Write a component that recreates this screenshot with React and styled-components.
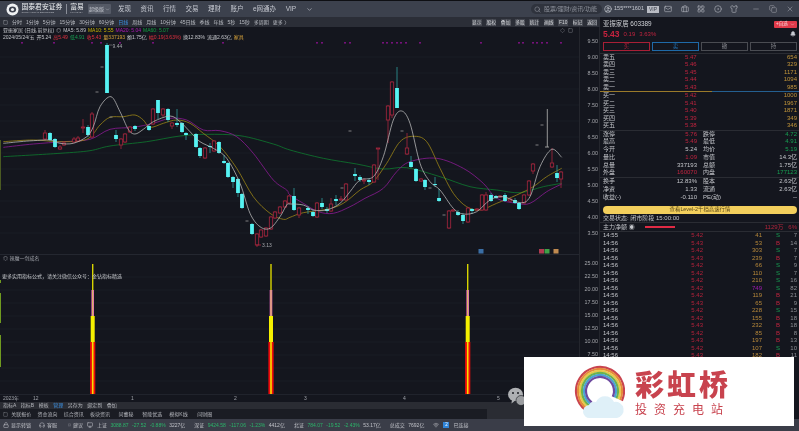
import React from "react";
import styled, { createGlobalStyle } from "styled-components";
import { Mail, Briefcase, LayoutGrid, CircleDot, Shirt, Minus, Copy, X, Search, Bell, CircleUser, ChevronDown, Square, Diamond, Headphones, MessageSquare, Monitor, Wifi, Lock } from "lucide-react";

const GlobalStyle = createGlobalStyle`
  html, body { margin: 0; padding: 0; background: #14161e; }
  * { box-sizing: border-box; }
`;

const navItems = ["发现", "资讯", "行情", "交易", "理财", "账户", "e网通办", "VIP"];
const periods = ["分时", "1分钟", "5分钟", "15分钟", "30分钟", "60分钟", "日线", "周线", "月线", "10分钟", "45日线", "季线", "年线", "5秒", "15秒", "多周期", "更多 〉"];
const toolButtons = ["显示", "股权", "叠加", "多股", "统计", "画线", "F10", "标记", "返回"];
const priceLabels = ["9.50", "9.00", "8.50", "8.00", "7.50", "7.00", "6.50", "6.00", "5.50", "5.00", "4.50", "4.00", "3.50"];
const indicatorLabels = ["25.00", "22.50", "20.00", "17.50", "15.00", "12.50", "10.00", "7.50"];

// x, top, bottom, wickTop, wickBottom
const downCandles = [
  [107, 45, 93, 43, 93], [50, 133, 140, 132, 141], [55, 139, 147, 138, 148], [88, 127, 135, 125, 137],
  [116, 135, 139, 130, 142], [135, 126, 129, 125, 131], [149, 126, 130, 125, 131], [158, 100, 113, 100, 119],
  [168, 109, 120, 108, 122], [177, 123, 125, 109, 127], [182, 123, 132, 122, 133], [186, 133, 135, 132, 140],
  [196, 134, 147, 133, 148], [200, 148, 156, 147, 158], [210, 146, 147, 143, 153], [219, 142, 153, 141, 154],
  [224, 161, 163, 155, 164], [228, 163, 177, 162, 178], [233, 177, 182, 176, 188], [238, 179, 193, 178, 197],
  [242, 194, 208, 193, 209], [252, 224, 234, 223, 235], [294, 196, 210, 188, 211], [308, 208, 210, 206, 214],
  [313, 212, 216, 210, 217], [322, 203, 207, 198, 209], [327, 209, 211, 207, 213], [336, 199, 201, 195, 205],
  [355, 174, 176, 168, 181], [360, 177, 180, 175, 182], [369, 180, 182, 178, 185], [397, 88, 108, 67, 108],
  [411, 162, 167, 156, 168], [416, 169, 181, 168, 182], [425, 180, 187, 179, 190], [435, 184, 185, 177, 187],
  [439, 198, 201, 189, 202], [458, 212, 215, 210, 216], [463, 215, 221, 213, 224], [472, 209, 211, 208, 214],
  [491, 195, 201, 193, 202], [496, 196, 198, 195, 199], [505, 195, 201, 193, 202], [515, 200, 203, 198, 204],
  [519, 203, 209, 202, 210], [557, 173, 178, 165, 182]
];
const upCandles = [
  [45, 133, 139, 130, 140], [60, 147, 149, 145, 150], [64, 143, 145, 141, 146], [74, 139, 142, 137, 143],
  [78, 138, 141, 136, 142], [83, 127, 128, 119, 133], [92, 114, 137, 112, 138], [121, 139, 145, 138, 149],
  [125, 134, 142, 133, 143], [130, 127, 132, 126, 133], [153, 109, 124, 108, 125], [163, 109, 115, 108, 117],
  [172, 123, 126, 122, 129], [205, 148, 158, 147, 159], [214, 141, 151, 140, 152], [257, 234, 245, 233, 247],
  [261, 230, 237, 229, 238], [266, 228, 236, 227, 237], [271, 217, 229, 216, 230], [275, 212, 218, 211, 219],
  [280, 207, 213, 206, 214], [285, 201, 207, 200, 208], [289, 196, 203, 195, 204], [299, 208, 215, 207, 218],
  [317, 203, 217, 202, 218], [331, 204, 211, 198, 212], [341, 199, 200, 196, 201], [346, 184, 200, 183, 201],
  [364, 180, 181, 178, 184], [374, 165, 182, 164, 183], [378, 148, 149, 148, 180], [388, 106, 120, 105, 143],
  [392, 82, 115, 81, 118], [407, 148, 154, 133, 155], [421, 179, 181, 178, 182], [449, 211, 228, 210, 229],
  [453, 210, 211, 209, 212], [468, 208, 222, 207, 223], [477, 209, 210, 208, 211], [482, 195, 210, 194, 211],
  [486, 195, 210, 192, 211], [500, 196, 197, 195, 198], [510, 199, 201, 198, 202], [524, 195, 203, 194, 204],
  [529, 181, 195, 180, 196], [533, 164, 171, 163, 174], [552, 163, 167, 148, 168], [561, 172, 179, 171, 188]
];
const dashMarks = [[97, 92], [111, 117], [102, 67], [342, 188], [350, 131], [402, 131], [430, 188], [444, 215], [542, 125], [537, 145], [247, 221]];
const signalDots = [22, 54, 92, 101, 120, 153, 223, 317, 322, 345, 350, 383, 387, 392, 397, 401, 406, 420, 481, 519, 523, 533, 537, 542, 547, 561];

const fromZoom = (left, right) => [
  ...left.map(([x, y]) => [x / 3, 40 + y / 3]),
  ...right.map(([x, y]) => [290 + x / 3, 40 + y / 3])
];
const ma5 = fromZoom(
  [[10, 310], [60, 305], [100, 302], [150, 300], [180, 310], [220, 310], [260, 290], [280, 260], [300, 200], [333, 170], [360, 215], [385, 268], [405, 282], [430, 268], [460, 245], [510, 228], [540, 245], [570, 275], [600, 305], [640, 325], [680, 355], [720, 430], [750, 520], [780, 560], [810, 565], [840, 530], [860, 495]],
  [[0, 492], [40, 495], [70, 510], [110, 510], [150, 490], [180, 455], [210, 420], [250, 410], [280, 350], [310, 240], [335, 213], [360, 250], [390, 370], [420, 425], [450, 450], [490, 505], [520, 522], [560, 515], [600, 480], [640, 470], [690, 488], [720, 470], [750, 380], [785, 328], [815, 352]]
);
const ma10 = fromZoom(
  [[10, 305], [100, 300], [180, 305], [260, 298], [300, 255], [330, 232], [370, 230], [405, 225], [430, 240], [450, 262], [490, 250], [530, 240], [570, 250], [610, 280], [660, 320], [710, 385], [760, 470], [810, 520], [850, 538]],
  [[0, 532], [40, 518], [110, 508], [160, 490], [210, 450], [250, 425], [290, 370], [330, 305], [370, 289], [410, 305], [450, 385], [490, 460], [530, 500], [570, 510], [620, 490], [680, 465], [730, 440], [770, 410], [815, 385]]
);
const ma20 = fromZoom(
  [[10, 322], [100, 312], [190, 305], [270, 298], [330, 268], [400, 262], [460, 250], [510, 235], [560, 240], [610, 270], [660, 272], [710, 290], [760, 340], [820, 420], [860, 450]],
  [[0, 465], [40, 490], [85, 515], [130, 520], [180, 500], [225, 475], [280, 445], [320, 395], [360, 365], [440, 355], [520, 385], [580, 430], [620, 475], [680, 490], [720, 490], [770, 455], [815, 432]]
);
const ma60 = fromZoom(
  [[10, 350], [180, 340], [270, 332], [330, 318], [440, 305], [540, 288], [620, 283], [720, 287], [820, 312]],
  [[0, 330], [100, 355], [200, 372], [280, 387], [350, 383], [450, 410], [540, 440], [620, 450], [690, 458], [760, 440], [815, 430]]
);

// catmull-rom through the hand read points
const smooth = pts => {
  let d = `M${pts[0][0]} ${pts[0][1]}`;
  for (let i = 0; i < pts.length - 1; i++) {
    const p0 = pts[i - 1] || pts[i];
    const p1 = pts[i];
    const p2 = pts[i + 1];
    const p3 = pts[i + 2] || p2;
    const c1x = p1[0] + (p2[0] - p0[0]) / 6;
    const c1y = p1[1] + (p2[1] - p0[1]) / 6;
    const c2x = p2[0] - (p3[0] - p1[0]) / 6;
    const c2y = p2[1] - (p3[1] - p1[1]) / 6;
    d += ` C${c1x.toFixed(1)} ${c1y.toFixed(1)} ${c2x.toFixed(1)} ${c2y.toFixed(1)} ${p2[0].toFixed(1)} ${p2[1].toFixed(1)}`;
  }
  return d;
};

const askRows = [["卖五", "5.47", "654"], ["卖四", "5.46", "329"], ["卖三", "5.45", "1171"], ["卖二", "5.44", "1094"], ["卖一", "5.43", "985"]];
const bidRows = [["买一", "5.42", "1000"], ["买二", "5.41", "1967"], ["买三", "5.40", "1871"], ["买四", "5.39", "349"], ["买五", "5.38", "346"]];
const statsA = [
  ["涨停", "5.76", "red", "跌停", "4.72", "green"],
  ["最高", "5.49", "red", "最低", "4.91", "green"],
  ["今开", "5.24", "", "均价", "5.19", "green"],
  ["量比", "1.09", "red", "市值", "14.3亿", ""],
  ["总量", "337193", "", "总额", "1.75亿", ""],
  ["外盘", "160070", "red", "内盘", "177123", "green"]
];
const statsB = [
  ["换手", "12.83%", "", "股本", "2.63亿", ""],
  ["净资", "1.33", "", "流通", "2.63亿", ""],
  ["收益(-)", "-0.110", "", "PE(动)", "--", ""]
];
const trades = [
  ["14:55", "5.42", "41", "S", "7"], ["14:56", "5.43", "53", "B", "14"], ["14:56", "5.42", "303", "S", "7"],
  ["14:56", "5.43", "239", "B", "7"], ["14:56", "5.42", "66", "S", "9"], ["14:56", "5.42", "110", "S", "7"],
  ["14:56", "5.42", "210", "S", "16"], ["14:56", "5.42", "749", "S", "82"], ["14:56", "5.42", "119", "B", "21"],
  ["14:56", "5.43", "65", "B", "9"], ["14:56", "5.42", "228", "S", "15"], ["14:56", "5.42", "155", "B", "18"],
  ["14:56", "5.43", "232", "B", "18"], ["14:56", "5.42", "85", "B", "8"], ["14:56", "5.43", "197", "B", "13"],
  ["14:56", "5.42", "107", "S", "10"], ["14:56", "5.43", "182", "B", "11"]
];
const ticks = [["2023年", 30], ["12", 98], ["1", 103], ["2", 70], ["3", 99], ["4", 94], ["5", 40]];
const tabs = ["指标A", "指标B", "模板", "管理", "另存为", "绑定到", "叠加"];
const newsTabs = ["关联报价", "资金流向", "综合资讯", "板块资讯", "问董秘", "智能优选", "模拟K线", "问财圈"];

const colorOf = tone => (tone === "red" ? "#c0243f" : tone === "green" ? "#17a052" : "#c4c6cb");

const CandleChart = () => (
  <ChartSvg viewBox="0 40 579 214" width="579" height="214">
    {[57, 73, 89, 105, 121, 137, 153, 169, 185, 201, 217, 233].map(y => (
      <line key={y} x1="0" x2="579" y1={y} y2={y} stroke="#191c25" strokeWidth="1" />
    ))}
    {signalDots.map(x => <rect key={x} x={x - 0.8} y="42" width="1.6" height="1.6" fill="#8e1292" />)}
    <path d={smooth(ma60)} fill="none" stroke="#0e7a2e" strokeWidth="0.8" />
    <path d={smooth(ma20)} fill="none" stroke="#8c1a94" strokeWidth="0.8" />
    <path d={smooth(ma10)} fill="none" stroke="#9a8416" strokeWidth="0.8" />
    {upCandles.map(([x, t, b, wt, wb]) => (
      <g key={"u" + x}>
        <line x1={x} x2={x} y1={wt} y2={t} stroke="#a8263e" strokeWidth="0.8" />
        <line x1={x} x2={x} y1={b} y2={wb} stroke="#a8263e" strokeWidth="0.8" />
        <rect x={x - 1.7} y={t} width="3.4" height={b - t} fill="#14161e" stroke="#a8263e" strokeWidth="0.8" />
      </g>
    ))}
    {downCandles.map(([x, t, b, wt, wb]) => (
      <g key={"d" + x}>
        <line x1={x} x2={x} y1={wt} y2={wb} stroke="#2f9c9c" strokeWidth="0.8" />
        <rect x={x - 1.9} y={t} width="3.8" height={b - t} fill="#56f3f3" />
      </g>
    ))}
    <path d={smooth(ma5)} fill="none" stroke="#bdbdbd" strokeWidth="0.75" />
    <line x1="547.3" x2="547.3" y1="109" y2="147" stroke="#a5a5a5" strokeWidth="0.9" />
    <line x1="545" x2="549" y1="147" y2="147" stroke="#a5a5a5" strokeWidth="0.9" />
    {dashMarks.map(([x, y]) => <line key={x + "-" + y} x1={x - 1.5} x2={x + 1.5} y1={y} y2={y} stroke="#9a9a9a" strokeWidth="0.8" />)}
    <line x1="109" x2="112" y1="45" y2="45" stroke="#8a8a8a" strokeWidth="0.6" />
    <ChartLabel x="112.5" y="47.5">9.44</ChartLabel>
    <line x1="256" x2="261" y1="245" y2="245" stroke="#a8263e" strokeWidth="0.8" />
    <ChartLabel x="262" y="247">3.13</ChartLabel>
    <rect x="478.5" y="249" width="5" height="4.5" fill="#3a6ea5" />
    <rect x="539" y="249" width="5" height="4.5" fill="#b03a50" />
    <rect x="544.5" y="249" width="5" height="4.5" fill="#3fa048" />
    <rect x="553.5" y="249" width="5" height="4.5" fill="#c08a50" />
    <rect x="0" y="140" width="1" height="50" fill="#4a5a22" />
  </ChartSvg>
);

const Spike = ({ x }) => (
  <g>
    <rect x={x - 0.7} y="263" width="1.4" height="26" fill="#d8d400" />
    <rect x={x - 1.3} y="289" width="2.6" height="26" fill="#e765c0" />
    <rect x={x - 0.5} y="289" width="1" height="26" fill="#d8c84a" />
    <rect x={x - 2} y="315" width="4" height="26" fill="#f5f000" />
    <rect x={x - 2.6} y="341" width="5.2" height="52" fill="#ee0a0a" />
    <rect x={x - 0.8} y="341" width="1.6" height="52" fill="#f5e000" />
  </g>
);

const IndicatorChart = () => (
  <ChartSvg viewBox="0 254 579 140" width="579" height="140">
    {[276, 289, 302, 315, 328, 341, 354, 367, 380].map(y => (
      <line key={y} x1="0" x2="579" y1={y} y2={y} stroke="#191c25" strokeWidth="1" />
    ))}
    <Spike x={92.7} />
    <Spike x={271} />
    <Spike x={467.7} />
    <rect x="0" y="279" width="1" height="3" fill="#6f9a20" />
    <rect x="0" y="292" width="1" height="30" fill="#6f9a20" />
    <rect x="0" y="334" width="1" height="32" fill="#6f9a20" />
  </ChartSvg>
);

const Logo = () => (
  <svg width="13" height="13" viewBox="0 0 13 13">
    <circle cx="6.5" cy="6.5" r="6" fill="#eef0f2" />
    <ellipse cx="6.5" cy="6.5" rx="3.6" ry="3" fill="#3d424e" />
    <ellipse cx="6.5" cy="6.5" rx="1.6" ry="1.6" fill="#eef0f2" />
  </svg>
);

const Rainbow = () => (
  <svg width="52" height="56" viewBox="573 363 52 56">
    {[["#c9444f", 24], ["#e58a3c", 22], ["#e7c94a", 20], ["#6db34d", 18], ["#4ba4d2", 16], ["#6d4a9f", 14]].map(([color, r]) => {
      const start = [600 + r * Math.cos(2.2), 390 + r * Math.sin(2.2)];
      const end = [600 + r * Math.cos(0.42), 390 + r * Math.sin(0.42)];
      return <path key={color} d={`M${start[0]} ${start[1]} A${r} ${r} 0 1 1 ${end[0]} ${end[1]}`} fill="none" stroke={color} strokeWidth="2.2" />;
    })}
    <path d="M590 417 a6.5 6.5 0 0 1 -1 -13 a6 6 0 0 1 7 -3 a10 10 0 0 1 18 0 a8 8 0 0 1 3 16 z" fill="#dff0f8" />
  </svg>
);

const WeChatMark = () => (
  <svg width="17" height="19" viewBox="0 0 17 19">
    <ellipse cx="7.5" cy="7.5" rx="7.5" ry="6.8" fill="#aeb0b3" />
    <path d="M4 12 L3.5 16.5 L8 13 z" fill="#aeb0b3" />
    <circle cx="5" cy="6" r="1" fill="#1a1c22" />
    <circle cx="10" cy="6" r="1" fill="#1a1c22" />
    <ellipse cx="13" cy="13.5" rx="5" ry="5" fill="#9c9ea1" stroke="#1a1c22" strokeWidth="0.6" />
  </svg>
);

export default function App() {
  return (
    <Page>
      <GlobalStyle />
      <TopStrip />
      <Header>
        <Brand>
          <Logo />
          <BrandText>
            <BrandName>国泰君安证券</BrandName>
            <BrandSub>GUOTAI JUNAN SECURITIES</BrandSub>
          </BrandText>
          <BrandDivider />
          <BrandText>
            <BrandName>富易</BrandName>
            <BrandSub>FUYI EASY</BrandSub>
          </BrandText>
        </Brand>
        <EditionButton>超级版 <ChevronDown size={5} /></EditionButton>
        <Nav>
          {navItems.map(item => <NavItem key={item}>{item}</NavItem>)}
          <ChevronDown size={7} color="#c5c8d0" />
        </Nav>
        <HeaderRight>
          <SearchBox><Search size={7} /> 股票/理财/资讯/功能</SearchBox>
          <CircleUser size={8} color="#c5c8d0" />
          <Account>155****1601</Account>
          <VipChip>VIP</VipChip>
          <IconRow>
            <Mail size={8} />
            <Briefcase size={8} />
            <LayoutGrid size={8} />
            <CircleDot size={8} />
            <Shirt size={8} />
          </IconRow>
          <WindowButtons>
            <Minus size={8} />
            <Copy size={8} />
            <X size={8} />
          </WindowButtons>
        </HeaderRight>
      </Header>
      <Body>
        <LeftColumn>
          <PeriodBar>
            <Square size={5} color="#a8abb2" />
            {periods.map(p => <Period key={p} $active={p === "日线"}>{p}</Period>)}
            <ToolGroup>
              {toolButtons.map(b => <ToolButton key={b}>{b}</ToolButton>)}
            </ToolGroup>
          </PeriodBar>
          <Pane>
            <PaneMain>
              <InfoBlock>
                <InfoLine>
                  <span>亚振家居 (日线,前复权)</span>
                  <span>◎</span>
                  <span>MA5: 5.89</span>
                  <Tone $c="#c9b400">MA10: 5.55</Tone>
                  <Tone $c="#b01ab8">MA20: 5.04</Tone>
                  <Tone $c="#12a040">MA60: 5.07</Tone>
                  <InfoIcons>
                    <Diamond size={5} />
                    <Square size={5} />
                  </InfoIcons>
                </InfoLine>
                <InfoLine>
                  <span>2024/05/24/五</span>
                  <span>开5.24</span>
                  <Tone $c="#e0303f">高5.49</Tone>
                  <Tone $c="#17a052">低4.91</Tone>
                  <Tone $c="#e0303f">收5.43</Tone>
                  <Tone $c="#d6a23a">量337193</Tone>
                  <span>额1.75亿</span>
                  <Tone $c="#e0303f">幅0.19(3.63%)</Tone>
                  <span>换12.83%</span>
                  <span>流通2.63亿</span>
                  <Tone $c="#d6a23a">家具</Tone>
                </InfoLine>
              </InfoBlock>
              <CandleChart />
            </PaneMain>
            <Axis $top={6}>
              {priceLabels.map(l => <AxisLabel key={l} $step={16}>{l}</AxisLabel>)}
            </Axis>
          </Pane>
          <Pane>
            <IndicatorPane>
              <IndicatorChart />
              <IndicatorLegend>
                <LegendTitle>◎ 辣魔一剑成名</LegendTitle>
                <LegendNote>更多实用指标公式，请关注微信公众号：金钻指标精选</LegendNote>
              </IndicatorLegend>
              <WeChatFloat><WeChatMark /></WeChatFloat>
            </IndicatorPane>
            <Axis $top={3}>
              {indicatorLabels.map(l => <AxisLabel key={l} $step={13}>{l}</AxisLabel>)}
            </Axis>
          </Pane>
          <DateAxis>
            {ticks.map(([t, w]) => <DateTick key={t} $w={w}>{t}</DateTick>)}
          </DateAxis>
          <TabRow>
            {tabs.map(t => <Tab key={t} $active={t === "管理"}>{t}</Tab>)}
          </TabRow>
          <NewsRow>
            <Square size={5} color="#8a8d94" />
            {newsTabs.map(t => <NewsTab key={t}>{t}</NewsTab>)}
          </NewsRow>
        </LeftColumn>
        <SidePanel>
          <StockHead>
            <StockName>亚振家居 603389</StockName>
            <AddButton>+自选 <ChevronDown size={5} /></AddButton>
          </StockHead>
          <PriceLine>
            <BigPrice>5.43</BigPrice>
            <span>0.19</span>
            <span>3.63%</span>
            <BellWrap><Bell size={6} fill="#c8cbd2" /></BellWrap>
          </PriceLine>
          <TradeButtons>
            <TradeButton $c="#a81f36">买</TradeButton>
            <TradeButton $c="#1f6aa8">卖</TradeButton>
            <TradeButton $c="#4a4c52">撤</TradeButton>
            <TradeButton $c="#4a4c52">持</TradeButton>
          </TradeButtons>
          <BookBlock>
            {askRows.map(r => <BookRow key={r[0]}><span>{r[0]}</span><BookPrice>{r[1]}</BookPrice><BookQty>{r[2]}</BookQty></BookRow>)}
            <BookSplit><SplitPart $c="#9a7a2a" $w={112} /><SplitPart $c="#245f90" $w={87} /></BookSplit>
            {bidRows.map(r => <BookRow key={r[0]}><span>{r[0]}</span><BookPrice>{r[1]}</BookPrice><BookQty>{r[2]}</BookQty></BookRow>)}
          </BookBlock>
          <StatsBlock>
            {statsA.map(r => (
              <StatRow key={r[0]}>
                <span>{r[0]}</span><StatValue $c={colorOf(r[2])}>{r[1]}</StatValue>
                <span>{r[3]}</span><StatValue $c={colorOf(r[5])}>{r[4]}</StatValue>
              </StatRow>
            ))}
          </StatsBlock>
          <StatsBlock>
            {statsB.map(r => (
              <StatRow key={r[0]}>
                <span>{r[0]}</span><StatValue $c={colorOf(r[2])}>{r[1]}</StatValue>
                <span>{r[3]}</span><StatValue $c={colorOf(r[5])}>{r[4]}</StatValue>
              </StatRow>
            ))}
          </StatsBlock>
          <Banner>查看Level-2千档高速行情</Banner>
          <StateRow>交易状态: 闭市阶段 15:00:00</StateRow>
          <FlowRow>
            <span>主力净额 ◉</span>
            <FlowBar />
            <FlowAmount>1129万</FlowAmount>
            <FlowPct>6%</FlowPct>
          </FlowRow>
          <TradeList>
            {trades.map((t, i) => (
              <TradeRow key={i}>
                <span>{t[0]}</span>
                <TradePrice>{t[1]}</TradePrice>
                <TradeVol $big={t[2] === "749"}>{t[2]}</TradeVol>
                <TradeFlag $buy={t[3] === "B"}>{t[3]}</TradeFlag>
                <TradeCount>{t[4]}</TradeCount>
              </TradeRow>
            ))}
          </TradeList>
        </SidePanel>
      </Body>
      <StatusBar>
        <StatusItem $w={32}><Lock size={6} /> 显示转锁</StatusItem>
        <StatusItem $w={25}><Headphones size={6} /> 客服</StatusItem>
        <StatusItem $w={15}><MessageSquare size={6} /> 建议</StatusItem>
        <StatusIcon><Monitor size={6} /></StatusIcon>
        <Quote><b>上证</b><Down>3088.87</Down><Down>-27.52</Down><Down>-0.88%</Down><span>3227亿</span></Quote>
        <Quote><b>深证</b><Down>9424.58</Down><Down>-117.06</Down><Down>-1.23%</Down><span>4412亿</span></Quote>
        <Quote><b>北证</b><Down>784.07</Down><Down>-19.52</Down><Down>-2.43%</Down><span>53.17亿</span></Quote>
        <Quote><b>总成交</b><span>7692亿</span></Quote>
        <Wifi size={6} />
        <LinkChip>2</LinkChip>
        <span>已连接</span>
      </StatusBar>
      <Watermark>
        <Rainbow />
        <WatermarkText>
          <WatermarkTitle>彩虹桥</WatermarkTitle>
          <WatermarkSub>投资充电站</WatermarkSub>
        </WatermarkText>
      </Watermark>
    </Page>
  );
}

const Page = styled.div`
  position: relative;
  width: 799px;
  height: 431px;
  overflow: hidden;
  display: flex;
  flex-direction: column;
  background: #14161e;
  color: #c4c6cb;
  font-family: "Liberation Sans", "Noto Sans CJK SC", sans-serif;
  font-size: 6.5px;
  line-height: 1;
  filter: blur(0.45px);
`;
const TopStrip = styled.div`
  height: 1px;
  background: #0e0f13;
`;
const Header = styled.header`
  height: 16px;
  display: flex;
  align-items: center;
  background: #3c414d;
  color: #c5c8d0;
  padding-left: 6px;
`;
const Brand = styled.div`
  display: flex;
  align-items: center;
  width: 82px;
  flex: none;
  gap: 2.5px;
`;
const BrandText = styled.div`
  display: flex;
  flex-direction: column;
  gap: 1px;
`;
const BrandName = styled.div`
  color: #eef0f2;
  font-size: 6.8px;
  font-weight: 400;
  white-space: nowrap;
`;
const BrandSub = styled.div`
  color: #b8bbc2;
  font-size: 2.4px;
  white-space: nowrap;
`;
const BrandDivider = styled.div`
  width: 1px;
  height: 10px;
  background: #8a8e98;
  margin: 0 1px;
`;
const EditionButton = styled.div`
  width: 23px;
  height: 10px;
  flex: none;
  background: #555a66;
  border-radius: 1px;
  display: flex;
  align-items: center;
  justify-content: center;
  gap: 1px;
  font-size: 5px;
  white-space: nowrap;
`;
const Nav = styled.nav`
  display: flex;
  align-items: center;
  gap: 9.5px;
  margin-left: 7px;
  font-size: 6.5px;
`;
const NavItem = styled.span`
  white-space: nowrap;
`;
const HeaderRight = styled.div`
  margin-left: auto;
  display: flex;
  align-items: center;
`;
const SearchBox = styled.div`
  width: 71px;
  height: 10px;
  background: #2f333d;
  border-radius: 5px;
  display: flex;
  align-items: center;
  gap: 3px;
  padding-left: 3px;
  margin-right: 2px;
  color: #8d919b;
  font-size: 6px;
  white-space: nowrap;
`;
const Account = styled.span`
  margin: 0 3px 0 2px;
  font-size: 5.5px;
`;
const VipChip = styled.span`
  width: 12px;
  height: 7px;
  background: #b9bcc4;
  color: #3c414d;
  font-size: 5px;
  text-align: center;
  line-height: 7px;
`;
const IconRow = styled.div`
  display: flex;
  gap: 8.5px;
  margin-left: 5px;
  color: #a8abb4;
`;
const WindowButtons = styled.div`
  display: flex;
  gap: 9px;
  margin-left: 14px;
  margin-right: 5px;
  color: #8f939c;
`;
const Body = styled.div`
  flex: 1;
  min-height: 0;
  display: flex;
`;
const LeftColumn = styled.div`
  width: 600px;
  display: flex;
  flex-direction: column;
`;
const PeriodBar = styled.div`
  height: 10px;
  display: flex;
  align-items: center;
  gap: 4px;
  background: #2b2e37;
  padding-left: 3px;
  font-size: 5px;
  color: #b9bcc3;
`;
const Period = styled.span`
  white-space: nowrap;
  color: ${p => (p.$active ? "#3b8fe0" : "#b9bcc3")};
`;
const ToolGroup = styled.div`
  margin-left: auto;
  display: flex;
  gap: 4.4px;
  margin-right: 3px;
`;
const ToolButton = styled.span`
  width: 10px;
  height: 7px;
  background: #43464f;
  color: #d5d7db;
  font-size: 4.8px;
  line-height: 7px;
  text-align: center;
`;
const Pane = styled.div`
  display: flex;
  border-right: 1px solid #24262d;
`;
const PaneMain = styled.div`
  width: 579px;
  display: flex;
  flex-direction: column;
`;
const InfoBlock = styled.div`
  height: 13px;
  padding: 0 3px;
  display: flex;
  flex-direction: column;
  justify-content: center;
  gap: 1px;
  font-size: 5px;
`;
const InfoLine = styled.div`
  display: flex;
  align-items: center;
  gap: 2px;
  white-space: nowrap;
  height: 6px;
`;
const InfoIcons = styled.div`
  margin-left: auto;
  margin-right: 3px;
  display: flex;
  gap: 3px;
  color: #8a8d94;
`;
const Tone = styled.span`
  color: ${p => p.$c};
`;
const ChartSvg = styled.svg`
  display: block;
  flex: none;
`;
const ChartLabel = styled.text`
  fill: #a5a7ac;
  font-size: 5px;
`;
const Axis = styled.div`
  width: 20px;
  border-left: 1px solid #24262d;
  padding-top: ${p => p.$top}px;
  display: flex;
  flex-direction: column;
  align-items: flex-end;
  padding-right: 1px;
`;
const AxisLabel = styled.div`
  height: ${p => p.$step}px;
  line-height: ${p => p.$step}px;
  font-size: 5.4px;
  color: #a5a7ac;
`;
const IndicatorPane = styled.div`
  position: relative;
  width: 579px;
  height: 140px;
  border-top: 1px solid #242730;
`;
const IndicatorLegend = styled.div`
  position: absolute;
  left: 3px;
  top: 1px;
`;
const LegendTitle = styled.div`
  height: 7px;
  font-size: 5px;
  color: #9fa2a9;
`;
const LegendNote = styled.div`
  margin-top: 11px;
  margin-left: -1px;
  font-size: 5px;
  color: #c8cace;
  white-space: nowrap;
`;
const WeChatFloat = styled.div`
  position: absolute;
  left: 508px;
  top: 132px;
`;
const DateAxis = styled.div`
  height: 8px;
  display: flex;
  align-items: center;
  padding-left: 3px;
  background: #14161e;
  border-top: 1px solid #20232c;
  font-size: 5px;
  color: #9fa2a9;
`;
const DateTick = styled.span`
  width: ${p => p.$w}px;
  flex: none;
`;
const TabRow = styled.div`
  height: 7px;
  display: flex;
  align-items: center;
  gap: 4.5px;
  background: #2a2c33;
  padding-left: 3px;
  font-size: 5px;
`;
const Tab = styled.span`
  color: ${p => (p.$active ? "#3b8fe0" : "#b4b6bc")};
`;
const NewsRow = styled.div`
  height: 10px;
  display: flex;
  align-items: center;
  padding-left: 3px;
  background: linear-gradient(90deg, #1a1c23 0 487px, #2a2c33 487px);
  font-size: 5px;
`;
const NewsTab = styled.span`
  width: 25.7px;
  margin-left: 0.5px;
  text-align: center;
  color: #b4b6bc;
  white-space: nowrap;
`;
const SidePanel = styled.aside`
  width: 199px;
  overflow: hidden;
  display: flex;
  flex-direction: column;
  padding: 0 2px 0 3px;
  background: #14161e;
  font-size: 6px;
`;
const StockHead = styled.div`
  height: 11px;
  flex: none;
  padding-top: 3px;
  display: flex;
  align-items: center;
  justify-content: space-between;
`;
const StockName = styled.div`
  font-size: 6.4px;
  color: #d0d2d7;
`;
const AddButton = styled.div`
  width: 23px;
  height: 7px;
  background: #e03a4a;
  color: #f6d9dc;
  font-size: 4.6px;
  display: flex;
  align-items: center;
  justify-content: center;
  gap: 2px;
  border-radius: 1px;
`;
const PriceLine = styled.div`
  height: 12px;
  flex: none;
  display: flex;
  align-items: center;
  gap: 4px;
  color: #c0243f;
  font-size: 6px;
`;
const BigPrice = styled.span`
  font-size: 8.5px;
  font-weight: 700;
  color: #c8233f;
`;
const BellWrap = styled.span`
  margin-left: auto;
  margin-right: 1px;
  color: #c8cbd2;
`;
const TradeButtons = styled.div`
  display: grid;
  grid-template-columns: repeat(4, 1fr);
  gap: 2px;
  height: 9px;
  margin-top: 2px;
  flex: none;
`;
const TradeButton = styled.div`
  border: 1px solid ${p => p.$c};
  color: ${p => p.$c === "#4a4c52" ? "#8a8c92" : p.$c};
  font-size: 5.5px;
  display: flex;
  align-items: center;
  justify-content: center;
`;
const BookBlock = styled.div`
  margin: 1.5px -2px 0 -3px;
  padding: 0 2px 0 3px;
  border-top: 1px solid #2a2c33;
  flex: none;
`;
const BookRow = styled.div`
  height: 7.5px;
  line-height: 7.5px;
  display: grid;
  grid-template-columns: 82px 12px 1fr;
`;
const BookPrice = styled.span`
  color: #c0243f;
`;
const BookQty = styled.span`
  text-align: right;
  color: #c2953a;
`;
const BookSplit = styled.div`
  display: flex;
  height: 1px;
  margin: 0 -2px 0 -3px;
`;
const SplitPart = styled.div`
  width: ${p => p.$w}px;
  background: ${p => p.$c};
`;
const StatsBlock = styled.div`
  margin: 0 -2px 0 -3px;
  padding: 0 2px 0 3px;
  border-top: 1px solid #2a2c33;
  flex: none;
`;
const StatRow = styled.div`
  height: 7.8px;
  line-height: 7.8px;
  display: grid;
  grid-template-columns: 20px 74px 30px 1fr;
  & > :nth-child(3) {
    padding-left: 6px;
    white-space: nowrap;
  }
`;
const StatValue = styled.span`
  text-align: right;
  color: ${p => p.$c};
`;
const Banner = styled.div`
  height: 8.5px;
  margin-top: 4px;
  flex: none;
  border-radius: 4.5px;
  background: #f3cf5c;
  color: #5c4a1a;
  font-size: 5.4px;
  display: flex;
  align-items: center;
  justify-content: center;
`;
const StateRow = styled.div`
  height: 7px;
  line-height: 7px;
  margin-top: 0.5px;
  flex: none;
  font-size: 6px;
`;
const FlowRow = styled.div`
  height: 10px;
  margin: 0.5px -2px 0 -3px;
  padding: 0 2px 0 3px;
  flex: none;
  border-top: 1px solid #2a2c33;
  border-bottom: 1px solid #2a2c33;
  display: flex;
  align-items: center;
  font-size: 6px;
`;
const FlowBar = styled.div`
  width: 30px;
  height: 2.5px;
  margin-left: 10px;
  background: #e02a44;
`;
const FlowAmount = styled.span`
  margin-left: 90px;
  color: #b0253c;
`;
const FlowPct = styled.span`
  margin-left: auto;
  color: #b0253c;
`;
const TradeList = styled.div`
  padding-top: 0;
`;
const TradeRow = styled.div`
  height: 7.5px;
  line-height: 7.5px;
  display: grid;
  grid-template-columns: 88px 12px 59px 18px 1fr;
`;
const TradePrice = styled.span`
  text-align: right;
  color: #b4223b;
`;
const TradeVol = styled.span`
  text-align: right;
  color: ${p => (p.$big ? "#a01ab0" : "#b8893a")};
`;
const TradeFlag = styled.span`
  text-align: right;
  color: ${p => (p.$buy ? "#c0243f" : "#17a052")};
`;
const TradeCount = styled.span`
  text-align: right;
  color: #8d8f95;
`;
const StatusBar = styled.footer`
  height: 12px;
  flex: none;
  display: flex;
  align-items: center;
  gap: 4px;
  padding-left: 3px;
  background: #3a3d48;
  color: #c0c2c8;
  font-size: 5px;
  white-space: nowrap;
`;
const StatusItem = styled.span`
  width: ${p => p.$w}px;
  flex: none;
  display: flex;
  align-items: center;
  gap: 2px;
`;
const StatusIcon = styled.span`
  display: flex;
`;
const Quote = styled.span`
  display: flex;
  gap: 3.5px;
  margin-right: 5px;
  b {
    font-weight: 400;
  }
`;
const Down = styled.span`
  color: #2bb56a;
`;
const LinkChip = styled.span`
  width: 6px;
  height: 6px;
  background: #2f84d8;
  color: #fff;
  font-size: 4.5px;
  line-height: 6px;
  text-align: center;
`;
const Watermark = styled.div`
  position: absolute;
  left: 524px;
  top: 357px;
  width: 270px;
  height: 69px;
  background: #fff;
  display: flex;
  align-items: center;
  gap: 10px;
  padding-left: 49px;
`;
const WatermarkText = styled.div`
  display: flex;
  flex-direction: column;
  align-items: flex-start;
  gap: 4px;
  color: #c8434e;
  font-family: "Noto Sans CJK SC", sans-serif;
`;
const WatermarkTitle = styled.div`
  font-size: 29px;
  line-height: 30px;
  font-weight: 900;
  letter-spacing: 3px;
`;
const WatermarkSub = styled.div`
  font-size: 12px;
  line-height: 13px;
  letter-spacing: 7px;
`;
